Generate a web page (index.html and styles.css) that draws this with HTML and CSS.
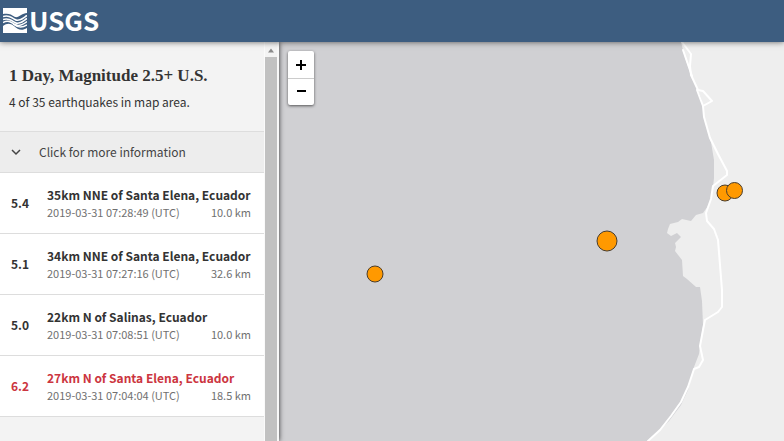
FILE: index.html
```html
<!DOCTYPE html>
<html lang="en">
<head>
<meta charset="utf-8">
<meta name="viewport" content="width=device-width, initial-scale=1">
<title>Latest Earthquakes</title>
<link rel="stylesheet" href="styles.css">
</head>
<body>
<header class="banner">
  <a class="logo" href="#" aria-label="USGS">
    <svg class="logo-mark" viewBox="0 0 24 25" aria-hidden="true">
      <path fill="#fff" d="M0 0H24V5C19 5 16 10 12 9C8 6 5 5 0 6Z"/>
      <path fill="#fff" d="M0 18C4 15 7 15 11 18C15 22 19 23 24 20V25H0Z"/>
      <g fill="none" stroke="#fff" stroke-width="1.500">
        <path d="M0 8.500C5 7 8 9 12 11.500S20 10 24 7.500"/>
        <path d="M0 11.500C5 10 8 12 12 14.500S20 13 24 10.500"/>
        <path d="M0 14.500C5 12 8 14 12 16.500S20 16.500 24 13.500"/>
        <path d="M10 16C15 20 19 20 24 17"/>
      </g>
    </svg>
    <span class="logo-text">USGS</span>
  </a>
</header>
<div class="app">
  <aside class="sidebar">
    <div class="panel">
      <div class="summary">
        <h1>1 Day, Magnitude 2.5+ U.S.</h1>
        <p>4 of 35 earthquakes in map area.</p>
      </div>
      <button class="more" type="button">
        <svg class="chevron" viewBox="0 0 10 10" aria-hidden="true"><path d="M1 3L5 7L9 3" fill="none" stroke="#444" stroke-width="1.500"/></svg>
        <span>Click for more information</span>
      </button>
      <ol class="quakes">
        <li class="quake">
          <span class="mag">5.4</span>
          <div class="info">
            <h2>35km NNE of Santa Elena, Ecuador</h2>
            <div class="meta"><time>2019-03-31 07:28:49 (UTC)</time><span>10.0 km</span></div>
          </div>
        </li>
        <li class="quake">
          <span class="mag">5.1</span>
          <div class="info">
            <h2>34km NNE of Santa Elena, Ecuador</h2>
            <div class="meta"><time>2019-03-31 07:27:16 (UTC)</time><span>32.6 km</span></div>
          </div>
        </li>
        <li class="quake">
          <span class="mag">5.0</span>
          <div class="info">
            <h2>22km N of Salinas, Ecuador</h2>
            <div class="meta"><time>2019-03-31 07:08:51 (UTC)</time><span>10.0 km</span></div>
          </div>
        </li>
        <li class="quake big">
          <span class="mag">6.2</span>
          <div class="info">
            <h2>27km N of Santa Elena, Ecuador</h2>
            <div class="meta"><time>2019-03-31 07:04:04 (UTC)</time><span>18.5 km</span></div>
          </div>
        </li>
      </ol>
    </div>
    <div class="scrollbar" aria-hidden="true">
      <svg class="arrow" viewBox="0 0 12 14"><path d="M3 10L6 6L9 10Z" fill="#8a8a8a"/></svg>
      <div class="thumb"></div>
    </div>
  </aside>
  <main class="map">
    <svg class="terrain" viewBox="279 42 505 399" preserveAspectRatio="xMidYMid slice" role="img" aria-label="Map of the Ecuador coast">
      <path fill="#d0d0d3" d="M279 42H681L685 58L693 80L701 98L706 125L711 142L714 160L714 178L712 196L708 206L703 213L696 215L691 221L682 219L678 222L670 224L668 229L667 233L671 236L677 233L681 237L675 243L676 247L675 251L682 260L683 276L687 279L696 287L700 287L702 301L703 325L700 345L699 354L694 367L688 390L681 405L669 421L648 441H279Z"/>
      <g fill="none" stroke="#fff" stroke-width="2" stroke-linejoin="round" stroke-linecap="round">
        <path d="M682 42L691 54L690 66L691 75L698 90L703 91L712 101L703 106L704 117L710 138L718 154L727 171L727 175L713 186L711 199L706 213L707 221L714 229L718 240L722 290L722 307L718 312L705 320L703 330L700 346L703 360L699 367L694 369L688 387L681 402L671 416L660 430L648 441"/>
        <path d="M683 50L692 76"/>
        <path d="M697 90L703 106"/>
      </g>
      <g fill="#ff9900" stroke="#493c2c" stroke-width="1">
        <circle cx="375" cy="274" r="8"/>
        <circle cx="607" cy="241" r="10"/>
        <circle cx="725" cy="193" r="8"/>
        <circle cx="734.500" cy="190.500" r="8"/>
      </g>
    </svg>
    <div class="zoom">
      <button type="button" aria-label="Zoom in"><svg viewBox="0 0 10 10" aria-hidden="true"><path d="M5 0V10M0 5H10" stroke="#000" stroke-width="2"/></svg></button>
      <button type="button" aria-label="Zoom out"><svg viewBox="0 0 10 10" aria-hidden="true"><path d="M1 4H10" stroke="#000" stroke-width="2"/></svg></button>
    </div>
  </main>
</div>
</body>
</html>
```

FILE: styles.css
```css
* { box-sizing: border-box; }

body {
  margin: 0;
  height: 100vh;
  display: flex;
  flex-direction: column;
  overflow: hidden;
  color: #333;
  background: #f3f3f3;
  font-family: "Noto Sans CJK SC", "Open Sans", sans-serif;
  font-size: 12px;
  line-height: 20px;
}

h1, h2, p, ol { margin: 0; padding: 0; }

.banner {
  flex: none;
  position: relative;
  z-index: 2;
  height: 42px;
  padding: 0 3px;
  background: #3d5d80;
  box-shadow: 0 0 6px rgba(0, 0, 0, 0.6);
}

.logo {
  display: flex;
  align-items: center;
  gap: 2px;
  height: 40px;
  color: #fff;
  text-decoration: none;
}

.logo-mark { width: 24px; height: 25px; }

.logo-text {
  font-size: 26px;
  font-weight: 700;
}

.app {
  flex: 1;
  min-height: 0;
  display: flex;
}

.sidebar {
  flex: none;
  position: relative;
  z-index: 1;
  display: flex;
  width: 279px;
  border-right: 2px solid #f8f8f8;
  box-shadow: 0 0 5px rgba(0, 0, 0, 0.8);
  background: #f3f3f3;
}

.panel {
  flex: 1;
  min-width: 0;
  border-right: 1px solid #fafafa;
}

.summary { padding: 22px 9px 19px; }

.summary h1 {
  font-family: "Liberation Serif", serif;
  font-size: 17px;
  font-weight: 700;
  line-height: 24px;
  white-space: nowrap;
}

.summary p { padding-top: 4px; }

.more {
  display: flex;
  align-items: center;
  gap: 18px;
  width: 100%;
  height: 42px;
  padding: 0 11px;
  border: 0;
  border-top: 1px solid #ddd;
  border-bottom: 1px solid #ddd;
  background: #ededed;
  color: #444;
  font: inherit;
}

.chevron { width: 10px; height: 10px; }

.quakes { list-style: none; background: #fff; }

.quake {
  display: flex;
  align-items: center;
  gap: 12px;
  height: 61px;
  padding: 0 13px 1px 11px;
  border-bottom: 1px solid #ddd;
}

.mag { width: 24px; font-weight: 700; }

.info { flex: 1; min-width: 0; }

.info h2 {
  font-size: 12px;
  font-weight: 700;
  line-height: 18px;
  white-space: nowrap;
}

.meta {
  display: flex;
  justify-content: space-between;
  color: #707070;
  font-size: 11px;
  line-height: 16px;
  white-space: nowrap;
}

.big .mag, .big h2 { color: #cc3540; }

.scrollbar {
  flex: none;
  display: flex;
  flex-direction: column;
  width: 12px;
  background: #f3f3f3;
}

.arrow { width: 12px; height: 15px; }

.thumb { flex: 1; background: #c1c1c1; }

.map {
  flex: 1;
  position: relative;
  background: #eee;
}

.terrain {
  position: absolute;
  width: 100%;
  height: 100%;
}

.zoom {
  position: absolute;
  top: 9px;
  left: 9px;
  width: 26px;
  border-radius: 2px;
  background: #fff;
  box-shadow: 0 1px 3px rgba(0, 0, 0, 0.6);
}

.zoom button {
  display: flex;
  align-items: center;
  justify-content: center;
  width: 26px;
  height: 27px;
  padding: 0;
  border: 0;
  background: none;
}

.zoom button + button { border-top: 1px solid #ccc; }

.zoom svg { width: 10px; height: 10px; }
```
